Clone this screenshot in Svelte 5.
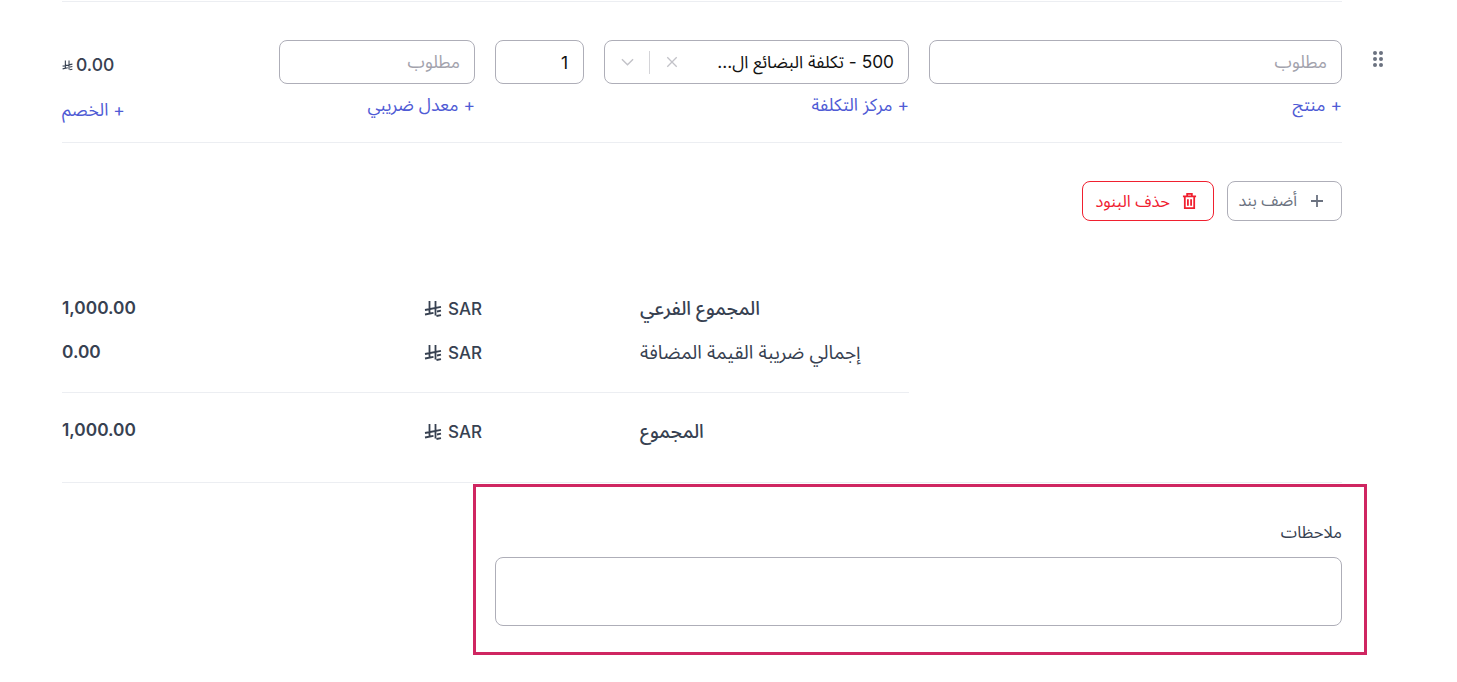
<script>
  const totals = [
    { label: 'المجموع الفرعي', value: '1,000.00', strong: true },
    { label: 'إجمالي ضريبة القيمة المضافة', value: '0.00', strong: false }
  ];
</script>

{#snippet riyal(cls)}
  <svg class={cls} viewBox="0 0 18 18" fill="none" stroke="currentColor" stroke-width="1.8" aria-hidden="true">
    <path d="M5.5 1v12.5M11.5 1v14.5M1 10l16-3.2M1 14.5l8.5-1.7M13 11.5l4-.8M12.5 16l4.5-.9" />
  </svg>
{/snippet}

<div class="page" dir="rtl">
  <section class="line">
    <div class="handle" aria-hidden="true">
      {#each Array(6) as _}<span></span>{/each}
    </div>
    <div class="fields">
      <div class="field product">
        <div class="input placeholder">مطلوب</div>
        <a href="#p">+ منتج</a>
      </div>
      <div class="field cost">
        <div class="input select">
          <span class="value">500 - تكلفة البضائع ال...</span>
          <svg class="x" viewBox="0 0 14 14" fill="none" stroke="currentColor" stroke-width="1.5"><path d="M1.5 1.5l11 11M12.5 1.5l-11 11" /></svg>
          <i class="sep"></i>
          <svg class="chev" viewBox="0 0 14 8" fill="none" stroke="currentColor" stroke-width="1.5"><path d="M1 1l6 6 6-6" /></svg>
        </div>
        <a href="#c">+ مركز التكلفة</a>
      </div>
      <div class="field qty">
        <div class="input num">1</div>
      </div>
      <div class="field tax">
        <div class="input placeholder">مطلوب</div>
        <a href="#t">+ معدل ضريبي</a>
      </div>
      <div class="field amount">
        <div class="sum"><span>0.00</span>{@render riyal('riyal-s')}</div>
        <a href="#d">+ الخصم</a>
      </div>
    </div>
  </section>

  <div class="actions">
    <button class="btn add">
      <svg viewBox="0 0 14 14" fill="none" stroke="currentColor" stroke-width="1.8"><path d="M7 1v12M1 7h12" /></svg>
      <span>أضف بند</span>
    </button>
    <button class="btn del">
      <svg viewBox="0 0 16 18" fill="none" stroke="currentColor" stroke-width="1.9"><path d="M1 4h14M5.5 4V1.5h5V4M3 4v12.5h10V4M6.3 7v7M9.7 7v7" /></svg>
      <span>حذف البنود</span>
    </button>
  </div>

  <div class="totals" dir="ltr">
    {#each totals as t}
      <div class="row">
        <span class="val">{t.value}</span>
        <span class="cur">{@render riyal('riyal')} SAR</span>
        <span class="lab" class:strong={t.strong} dir="rtl">{t.label}</span>
      </div>
    {/each}
    <div class="row final">
      <span class="val">1,000.00</span>
      <span class="cur">{@render riyal('riyal')} SAR</span>
      <span class="lab strong" dir="rtl">المجموع</span>
    </div>
  </div>

  <div class="rule"></div>

  <section class="notes">
    <label for="notes">ملاحظات</label>
    <textarea id="notes"></textarea>
  </section>
</div>

<style>
  :global(body) {
    margin: 0;
    background: #fff;
  }
  .page {
    box-sizing: border-box;
    width: 1457px;
    height: 682px;
    overflow: hidden;
    padding: 1px 115px 0 62px;
    font-family: Inter, "Noto Sans Arabic", sans-serif;
    color: #374151;
  }
  .line {
    display: flex;
    border-top: 1px solid #eceef2;
    border-bottom: 1px solid #eceef2;
    height: 142px;
    box-sizing: border-box;
    padding-top: 38px;
  }
  .handle {
    flex: none;
    width: 10px;
    height: 15px;
    margin: 11px -41px 0 31px;
    display: grid;
    grid-template-columns: 4px 4px;
    gap: 2px;
  }
  .handle span {
    width: 4px;
    height: 4px;
    border-radius: 50%;
    background: #6b7280;
  }
  .fields {
    flex: 1;
    display: flex;
    gap: 20px;
  }
  .field {
    display: flex;
    flex-direction: column;
    align-items: flex-start;
    gap: 11px;
  }
  .product { width: 413px; }
  .cost { width: 305px; }
  .qty { width: 89px; }
  .tax { width: 196px; }
  .amount {
    flex: 1;
    align-items: flex-end;
    gap: 24px;
    padding-top: 14px;
  }
  .input {
    box-sizing: border-box;
    width: 100%;
    height: 44px;
    border: 1px solid #aeaeb8;
    border-radius: 8px;
    padding: 0 14px;
    display: flex;
    align-items: center;
    font-size: 17.5px;
  }
  .placeholder { color: #a3a3ad; }
  .num { direction: ltr; justify-content: flex-end; color: #111; padding-right: 15px; }
  .select { color: #111; gap: 0; font-size: 17.3px; }
  .value { flex: 1; white-space: nowrap; overflow: hidden; }
  .x { width: 12px; height: 12px; color: #c2c2c8; margin-left: 16px; }
  .sep { width: 1px; height: 23px; background: #d4d4d8; margin-left: 15px; }
  .chev { width: 13px; height: 8px; color: #c2c2c8; margin-left: 2px; }
  a {
    font-size: 17.5px;
    line-height: 20px;
    color: #4f5bd5;
    text-decoration: none;
  }
  .sum {
    display: flex;
    align-items: center;
    gap: 3px;
    font-size: 17.5px;
    font-weight: 500;
    line-height: 22px;
    direction: rtl;
  }
  .riyal-s { width: 11px; height: 11px; }
  .actions {
    display: flex;
    gap: 13px;
    margin-top: 38px;
  }
  .btn {
    height: 40px;
    box-sizing: border-box;
    border-radius: 8px;
    background: #fff;
    font: inherit;
    font-size: 16.5px;
    display: flex;
    align-items: center;
    padding: 0;
  }
  .add { width: 115px; border: 1px solid #aeaeb8; color: #6b7280; padding-right: 17px; gap: 13px; font-size: 16px; }
  .add svg { width: 14px; height: 14px; }
  .del { width: 132px; border: 1px solid #f0202f; color: #f0202f; padding-right: 16px; gap: 12px; }
  .del svg { width: 15px; height: 18px; }
  .totals {
    width: 847px;
    margin-top: 66px;
    margin-right: auto;
    font-size: 17.3px;
  }
  .row {
    display: grid;
    grid-template-columns: 362px 216px 1fr;
    height: 44px;
    align-items: center;
    line-height: 22px;
  }
  .final {
    border-top: 1px solid #eceef2;
    margin-top: 17px;
    height: 77px;
  }
  .val { font-weight: 600; padding-bottom: 2px; }
  .final .val { padding-bottom: 4px; }
  .cur { display: flex; align-items: center; gap: 6px; font-weight: 500; font-size: 17px; }
  .riyal { width: 18px; height: 18px; }
  .lab { text-align: left; font-size: 19px; }
  .strong { font-weight: 500; }
  .rule {
    border-top: 1px solid #eceef2;
    margin-top: 12px;
  }
  .notes {
    box-sizing: border-box;
    width: 894px;
    height: 171px;
    margin: 1px -25px 0 0;
    border: 3px solid #cf2661;
    padding: 35px 22px 0 19px;
    display: flex;
    flex-direction: column;
  }
  label {
    font-size: 16.5px;
    line-height: 20px;
    margin-bottom: 15px;
  }
  textarea {
    box-sizing: border-box;
    width: 100%;
    height: 69px;
    border: 1px solid #aeaeb8;
    border-radius: 8px;
    resize: none;
    background: #fff;
  }
</style>
